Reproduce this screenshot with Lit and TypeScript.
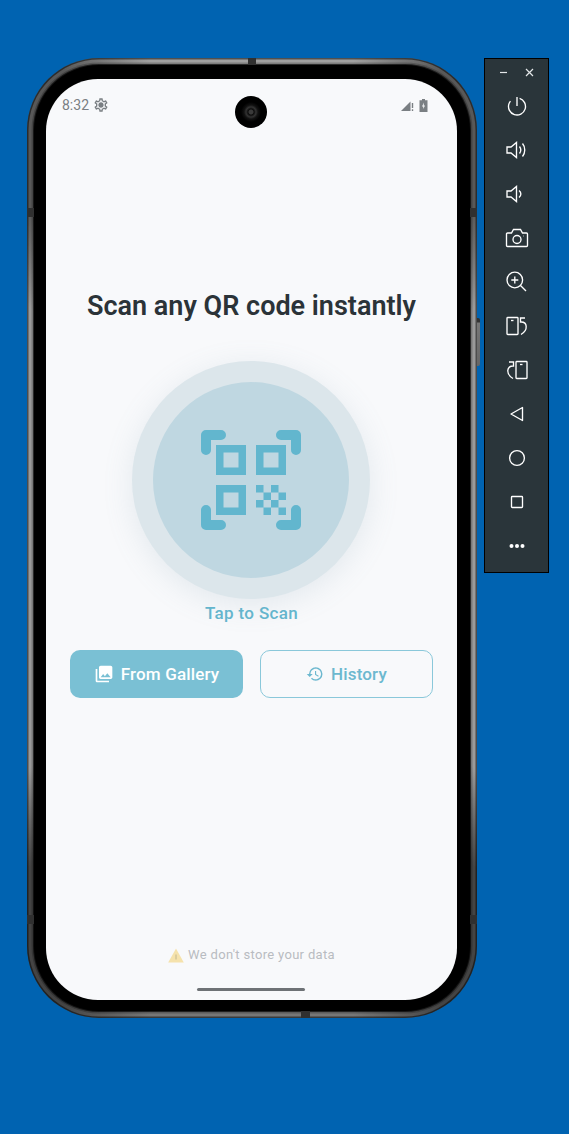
import { LitElement, html, css, svg } from 'lit';
import { customElement } from 'lit/decorators.js';

const speaker = svg`<path d="M2 9h4l5.5-4.500v15L6 15H2z"/>`;

const toolbarIcons = [
  svg`<circle cx="12" cy="12.500" r="8.500" stroke-dasharray="43 10.500" transform="rotate(-72 12 12.500)"/><path d="M12 3v9"/>`,
  svg`${speaker}<path d="M14.5 8.500c1.500 2 1.500 5 0 7M17.500 5.500c3 3.500 3 9.500 0 13"/>`,
  svg`${speaker}<path d="M14 8.500c2.500 2 2.500 5 0 7"/>`,
  svg`<path d="M2.500 7h4l2-3.500h7l2 3.500h4a1 1 0 0 1 1 1v11.500a1 1 0 0 1-1 1h-19a1 1 0 0 1-1-1V8a1 1 0 0 1 1-1z"/><circle cx="12" cy="13.500" r="4"/><path d="M18.500 10h.4"/>`,
  svg`<circle cx="9.800" cy="10" r="7.800"/><path d="M15.500 15.500l5.500 5.500M9.800 6.500v7M6.300 10h7"/>`,
  svg`<rect x="2" y="3.500" width="11" height="17" rx=".8"/><path d="M6 6.500h2.500"/><path d="M20 4h-4.500v4c7-.5 8 8 .5 12.500"/>`,
  svg`<rect x="11" y="3.500" width="11" height="17" rx=".8"/><path d="M15 6.500h2.500"/><path d="M4 4h4.500v4c-7-.5-8 8-.5 12.500"/>`,
  svg`<path d="M17.500 5.500v13L6 12z" stroke-linejoin="round"/>`,
  svg`<circle cx="12" cy="12" r="7.400"/>`,
  svg`<rect x="6.500" y="6.500" width="11" height="11" rx=".8"/>`,
  svg`<g fill="#fff" stroke="none"><circle cx="6.500" cy="12" r="2"/><circle cx="12" cy="12" r="2"/><circle cx="17.500" cy="12" r="2"/></g>`,
];

@customElement('app-root')
export class AppRoot extends LitElement {
  static styles = css`
    :host {
      display: block;
      width: 569px;
      height: 1134px;
      overflow: hidden;
      background: #0063b1;
      font-family: Roboto, 'Noto Sans', sans-serif;
    }

    .page {
      display: flex;
      align-items: flex-start;
      gap: 7px;
      padding: 58px 0 0 27px;
    }

    /* phone */
    .phone {
      position: relative;
      box-sizing: border-box;
      width: 450px;
      height: 960px;
      padding: 7px;
      border-radius: 72px;
      background: conic-gradient(
        #a0a0a0 0 12deg, #585858 22deg 34deg, #9a9a9a 44deg 136deg,
        #444 146deg 158deg, #777 168deg 192deg, #444 202deg 214deg,
        #9a9a9a 224deg 316deg, #585858 326deg 338deg, #a0a0a0 348deg
      );
      box-shadow: inset 0 0 0 1.5px rgba(0, 0, 0, 0.5);
    }

    .bezel {
      box-sizing: border-box;
      height: 100%;
      padding: 14px 13px 11px 12px;
      border-radius: 65px;
      background: #000;
      box-shadow:
        0 0 0 1px rgba(0, 0, 0, 0.65),
        0 0 0 2.5px rgba(0, 0, 0, 0.22);
    }

    .screen {
      position: relative;
      display: flex;
      flex-direction: column;
      align-items: center;
      box-sizing: border-box;
      height: 921px;
      padding-top: 15px;
      border-radius: 52px;
      background: #f8f9fb;
      overflow: hidden;
    }

    .notch {
      position: absolute;
      z-index: 1;
      background: #303030;
    }
    .notch.top { left: 221px; top: 0; width: 8px; height: 7px; }
    .notch.bottom { left: 274px; bottom: 0; width: 9px; height: 7px; }
    .notch.l1 { left: 0; top: 150px; width: 7px; height: 9px; }
    .notch.l2 { left: 0; top: 857px; width: 7px; height: 9px; }
    .notch.r1 { right: 0; top: 150px; width: 7px; height: 9px; }
    .notch.r2 { right: 0; top: 857px; width: 7px; height: 9px; }
    .side-key {
      position: absolute;
      right: -3px;
      width: 3px;
      border-radius: 0 2px 2px 0;
      background: linear-gradient(180deg, #333 0 4px, #777 5px, #666);
    }
    .side-key.power { top: 260px; height: 48px; }

    /* status bar */
    .status {
      display: flex;
      align-items: center;
      align-self: stretch;
      gap: 4px;
      height: 22px;
      padding: 0 29px 0 16px;
      color: #7a7f83;
      font-size: 14px;
    }
    .status .spacer { flex: 1; }
    .status svg { display: block; }
    .status .battery { margin-left: 1px; }
    .camera {
      position: absolute;
      left: 189px;
      top: 17px;
      width: 32px;
      height: 32px;
      border-radius: 50%;
      background: radial-gradient(circle, #3a3a3a 0 2px, #0b0b0b 3px, #333 5px, #111 7px, #000 10px);
    }

    /* main content */
    h1 {
      margin: 0;
      padding-top: 173px;
      color: #2b3338;
      font-size: 27px;
      line-height: 34px;
      font-weight: 600;
      white-space: nowrap;
    }

    .scan {
      display: flex;
      justify-content: center;
      align-items: center;
      box-sizing: border-box;
      width: 238px;
      height: 238px;
      margin: 38px 1px 0 0;
      border-radius: 50%;
      background: #dce6eb;
      box-shadow: 0 6px 30px rgba(120, 150, 165, 0.16);
    }
    .scan-inner {
      display: flex;
      justify-content: center;
      align-items: center;
      width: 196px;
      height: 196px;
      border-radius: 50%;
      background: #bfd7e1;
    }
    .scan-inner svg { display: block; fill: #62b6ce; }

    .tap {
      margin-top: 3px;
      color: #64b5cd;
      font-size: 17px;
      line-height: 22px;
      font-weight: 500;
      letter-spacing: 0.35px;
    }

    .actions {
      display: flex;
      gap: 17px;
      margin-top: 26px;
    }
    .btn {
      display: flex;
      justify-content: center;
      align-items: center;
      gap: 7px;
      box-sizing: border-box;
      width: 173px;
      height: 48px;
      border-radius: 10px;
      font-size: 17px;
      font-weight: 500;
      letter-spacing: 0.15px;
    }
    .btn svg { display: block; fill: currentColor; }
    .btn.filled { background: #7ac0d4; color: #fff; }
    .btn.outline {
      border: 1.5px solid #8ac8da;
      color: #6cb8cf;
    }

    .note {
      display: flex;
      align-items: center;
      gap: 4px;
      margin-top: auto;
      margin-bottom: 36px;
      color: #b8bcc1;
      font-size: 13px;
      line-height: 18px;
      letter-spacing: 0.32px;
    }
    .note svg { display: block; }

    .home-bar {
      position: absolute;
      left: 151px;
      bottom: 9px;
      width: 108px;
      height: 3px;
      border-radius: 2px;
      background: #6e7276;
    }

    /* emulator toolbar */
    .toolbar {
      box-sizing: border-box;
      width: 65px;
      height: 515px;
      border: 1px solid #000;
      background: #2a353a;
    }
    .win {
      display: flex;
      justify-content: center;
      gap: 17px;
      padding-top: 9px;
      height: 16px;
    }
    .win svg { display: block; stroke: #e4e7e9; stroke-width: 1.2; fill: none; }
    .tools {
      display: flex;
      flex-direction: column;
      align-items: center;
      gap: 20px;
      padding-top: 10px;
    }
    .tools svg {
      display: block;
      fill: none;
      stroke: #fff;
      stroke-width: 1.35;
    }
  `;

  render() {
    return html`
      <div class="page">
        <div class="phone">
          <span class="notch top"></span>
          <span class="notch bottom"></span>
          <span class="notch l1"></span>
          <span class="notch l2"></span>
          <span class="notch r1"></span>
          <span class="notch r2"></span>
          <span class="side-key power"></span>
          <div class="bezel">
            <div class="screen">
              <div class="status">
                <span>8:32</span>
                <svg width="16" height="16" viewBox="0 0 24 24" fill="#7a7f83">
                  <path d="M19.43 12.98c.04-.32.07-.64.07-.98 0-.34-.03-.66-.07-.98l2.11-1.65c.19-.15.24-.42.12-.64l-2-3.46a.5.5 0 0 0-.61-.22l-2.49 1c-.52-.4-1.08-.73-1.69-.98l-.38-2.65A.488.488 0 0 0 14 2h-4c-.25 0-.46.18-.49.42l-.38 2.65c-.61.25-1.17.59-1.69.98l-2.49-1a.566.566 0 0 0-.18-.03c-.17 0-.34.09-.43.25l-2 3.46c-.13.22-.07.49.12.64l2.11 1.65c-.04.32-.07.65-.07.98 0 .33.03.66.07.98l-2.11 1.65c-.19.15-.24.42-.12.64l2 3.46a.5.5 0 0 0 .61.22l2.49-1c.52.4 1.08.73 1.69.98l.38 2.65c.03.24.24.42.49.42h4c.25 0 .46-.18.49-.42l.38-2.65c.61-.25 1.17-.59 1.69-.98l2.49 1c.06.02.12.03.18.03.17 0 .34-.09.43-.25l2-3.46c.12-.22.07-.49-.12-.64l-2.11-1.65zm-1.98-1.71c.04.31.05.52.05.73 0 .21-.02.43-.05.73l-.14 1.13.89.7 1.08.84-.7 1.21-1.27-.51-1.04-.42-.9.68c-.43.32-.84.56-1.25.73l-1.06.43-.16 1.13-.2 1.35h-1.4l-.19-1.35-.16-1.13-1.06-.43c-.43-.18-.83-.41-1.23-.71l-.91-.7-1.06.43-1.27.51-.7-1.21 1.08-.84.89-.7-.14-1.13c-.03-.31-.05-.54-.05-.74s.02-.43.05-.73l.14-1.13-.89-.7-1.08-.84.7-1.21 1.27.51 1.04.42.9-.68c.43-.32.84-.56 1.25-.73l1.06-.43.16-1.13.2-1.35h1.39l.19 1.35.16 1.13 1.06.43c.43.18.83.41 1.23.71l.91.7 1.06-.43 1.27-.51.7 1.21-1.07.85-.89.7.14 1.13zM12 8c-2.21 0-4 1.79-4 4s1.79 4 4 4 4-1.79 4-4-1.79-4-4-4z"/>
                </svg>
                <span class="spacer"></span>
                <svg width="13" height="12" viewBox="0 0 13 12" fill="#7a7f83">
                  <path d="M0 12 9.500 2.500V12z"/><path d="M10.800 4h1.400v5h-1.400zM10.800 10.300h1.400V12h-1.400z"/>
                </svg>
                <svg class="battery" width="9" height="13" viewBox="0 0 9 13">
                  <path d="M3 0h3v1.200h2.500V13H.500V1.200H3z" fill="#7a7f83"/><path d="M5 3.500 3 7.500h1.300V10L6 6.500H4.700z" fill="#f8f9fb"/>
                </svg>
              </div>
              <span class="camera"></span>

              <h1>Scan any QR code instantly</h1>

              <div class="scan">
                <div class="scan-inner">
                  <svg width="120" height="120" viewBox="0 0 24 24">
                    <path d="M9.500 6.500v3h-3v-3h3M11 5H5v6h6V5zm-1.500 9.500v3h-3v-3h3M11 13H5v6h6v-6zm6.500-6.500v3h-3v-3h3M19 5h-6v6h6V5zm-6 8h1.500v1.500H13V13zm1.500 1.500H16V16h-1.500v-1.500zM16 13h1.500v1.500H16V13zm-3 3h1.500v1.500H13V16zm1.500 1.500H16V19h-1.500v-1.500zM16 16h1.500v1.500H16V16zm1.500-1.500H19V16h-1.500v-1.500zm0 3H19V19h-1.500v-1.500z"/>
                    <path d="M2 6V3a1 1 0 0 1 1-1h3a1 1 0 0 1 0 2H4v2a1 1 0 0 1-2 0zM22 6V3a1 1 0 0 0-1-1h-3a1 1 0 0 0 0 2h2v2a1 1 0 0 0 2 0zM2 18v3a1 1 0 0 0 1 1h3a1 1 0 0 0 0-2H4v-2a1 1 0 0 0-2 0zM22 18v3a1 1 0 0 1-1 1h-3a1 1 0 0 1 0-2h2v-2a1 1 0 0 1 2 0z"/>
                  </svg>
                </div>
              </div>

              <div class="tap">Tap to Scan</div>

              <div class="actions">
                <div class="btn filled">
                  <svg width="20" height="20" viewBox="0 0 24 24">
                    <path d="M22 16V4c0-1.100-.9-2-2-2H8c-1.100 0-2 .9-2 2v12c0 1.100.9 2 2 2h12c1.100 0 2-.9 2-2zm-11-4 2.030 2.710L16 11l4 5H8l3-4zM2 6v14c0 1.100.9 2 2 2h14v-2H4V6H2z"/>
                  </svg>
                  From Gallery
                </div>
                <div class="btn outline">
                  <svg width="18" height="18" viewBox="0 0 24 24">
                    <path d="M13 3a9 9 0 0 0-9 9H1l3.890 3.890.07.140L9 12H6c0-3.870 3.130-7 7-7s7 3.130 7 7-3.130 7-7 7c-1.930 0-3.680-.790-4.940-2.060l-1.420 1.420A8.954 8.954 0 0 0 13 21a9 9 0 0 0 0-18zm-1 5v5l4.280 2.540.720-1.210-3.500-2.080V8H12z"/>
                  </svg>
                  History
                </div>
              </div>

              <div class="note">
                <svg width="16" height="15" viewBox="0 0 16 15">
                  <path d="M8 .500 15.800 14.500H.200z" fill="#f5e2ac"/><path d="M7.600 6.500h.8v5h-.8z" fill="#b5ad8a"/>
                </svg>
                We don't store your data
              </div>
              <span class="home-bar"></span>
            </div>
          </div>
        </div>

        <div class="toolbar">
          <div class="win">
            <svg width="9" height="9" viewBox="0 0 9 9"><path d="M1 4.500h7"/></svg>
            <svg width="9" height="9" viewBox="0 0 9 9"><path d="M1 1l7 7M8 1l-7 7"/></svg>
          </div>
          <div class="tools">
            ${toolbarIcons.map(icon => html`
              <svg width="24" height="24" viewBox="0 0 24 24">${icon}</svg>
            `)}
          </div>
        </div>
      </div>
    `;
  }
}
